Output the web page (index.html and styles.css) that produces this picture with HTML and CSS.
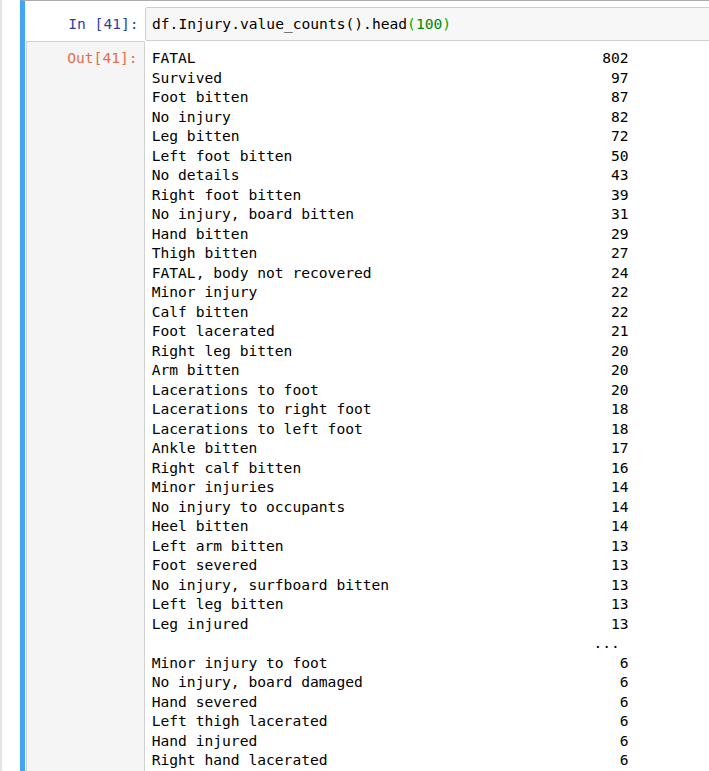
FILE: index.html
```html
<!DOCTYPE html>
<html>
<head>
<meta charset="utf-8">
<link rel="stylesheet" href="styles.css">
</head>
<body>
<div class="page">
  <div class="cell">
    <div class="input-row">
      <div class="prompt in-prompt">In&nbsp;[41]:</div>
      <div class="input-box"><pre class="code">df.Injury.value_counts().head<span class="br">(</span><span class="num">100</span><span class="br">)</span></pre></div>
    </div>
    <div class="output-row">
      <div class="prompt out-prompt">Out[41]:</div>
      <div class="output-box">
        <div class="series">
          <div class="row"><span>FATAL</span><span>802</span></div>
          <div class="row"><span>Survived</span><span>97</span></div>
          <div class="row"><span>Foot bitten</span><span>87</span></div>
          <div class="row"><span>No injury</span><span>82</span></div>
          <div class="row"><span>Leg bitten</span><span>72</span></div>
          <div class="row"><span>Left foot bitten</span><span>50</span></div>
          <div class="row"><span>No details</span><span>43</span></div>
          <div class="row"><span>Right foot bitten</span><span>39</span></div>
          <div class="row"><span>No injury, board bitten</span><span>31</span></div>
          <div class="row"><span>Hand bitten</span><span>29</span></div>
          <div class="row"><span>Thigh bitten</span><span>27</span></div>
          <div class="row"><span>FATAL, body not recovered</span><span>24</span></div>
          <div class="row"><span>Minor injury</span><span>22</span></div>
          <div class="row"><span>Calf bitten</span><span>22</span></div>
          <div class="row"><span>Foot lacerated</span><span>21</span></div>
          <div class="row"><span>Right leg bitten</span><span>20</span></div>
          <div class="row"><span>Arm bitten</span><span>20</span></div>
          <div class="row"><span>Lacerations to foot</span><span>20</span></div>
          <div class="row"><span>Lacerations to right foot</span><span>18</span></div>
          <div class="row"><span>Lacerations to left foot</span><span>18</span></div>
          <div class="row"><span>Ankle bitten</span><span>17</span></div>
          <div class="row"><span>Right calf bitten</span><span>16</span></div>
          <div class="row"><span>Minor injuries</span><span>14</span></div>
          <div class="row"><span>No injury to occupants</span><span>14</span></div>
          <div class="row"><span>Heel bitten</span><span>14</span></div>
          <div class="row"><span>Left arm bitten</span><span>13</span></div>
          <div class="row"><span>Foot severed</span><span>13</span></div>
          <div class="row"><span>No injury, surfboard bitten</span><span>13</span></div>
          <div class="row"><span>Left leg bitten</span><span>13</span></div>
          <div class="row"><span>Leg injured</span><span>13</span></div>
          <div class="row ellipsis"><span>...</span></div>
          <div class="row"><span>Minor injury to foot</span><span>6</span></div>
          <div class="row"><span>No injury, board damaged</span><span>6</span></div>
          <div class="row"><span>Hand severed</span><span>6</span></div>
          <div class="row"><span>Left thigh lacerated</span><span>6</span></div>
          <div class="row"><span>Hand injured</span><span>6</span></div>
          <div class="row"><span>Right hand lacerated</span><span>6</span></div>
        </div>
      </div>
    </div>
  </div>
</div>
</body>
</html>
```
FILE: styles.css
```css
html, body {
  margin: 0;
  padding: 0;
  height: 100%;
  overflow: hidden;
  background: #e3e3e3;
}

.page {
  margin-left: 2px;
  width: 800px;
  min-height: 100%;
  background: #ffffff;
  padding-left: 18px;
}

.cell {
  border-left: 5px solid #42a5f5;
  border-top: 1px solid #ababab;
  padding-top: 6px;
  min-height: 800px;
  display: flex;
  flex-direction: column;
}

.prompt,
.code,
.series {
  font-family: "DejaVu Sans Mono", "Liberation Mono", monospace;
  font-size: 14.62px;
  line-height: 19.5px;
}

.prompt {
  width: 120px;
  flex: none;
  box-sizing: border-box;
  text-align: right;
  padding-right: 6.4px;
}

.input-row {
  display: flex;
}

.in-prompt {
  color: #303f9f;
  padding-top: 7px;
}

.input-box {
  flex: 1;
  background: #f7f7f7;
  border: 1px solid #cfcfcf;
  border-radius: 2px;
  padding: 6px 6px 6.5px 6px;
}

.code {
  margin: 0;
  color: #000;
}

.br {
  color: #00aa00;
}

.num {
  color: #008800;
}

.output-row {
  display: flex;
  flex: 1;
}

.out-prompt {
  margin-left: 1px;
  width: 119px;
  background: #f5f5f5;
  border: 1px solid #d2d2d2;
  border-bottom: none;
  color: #df7050;
  padding-top: 6.25px;
}

.output-box {
  flex: 1;
  padding: 7.25px 6.7px;
}

.series {
  color: #000;
}

.row {
  display: flex;
  justify-content: space-between;
  width: calc(54ch + 2px);
  white-space: pre;
}

.ellipsis {
  justify-content: flex-end;
  box-sizing: border-box;
  padding-right: 1ch;
}
```
